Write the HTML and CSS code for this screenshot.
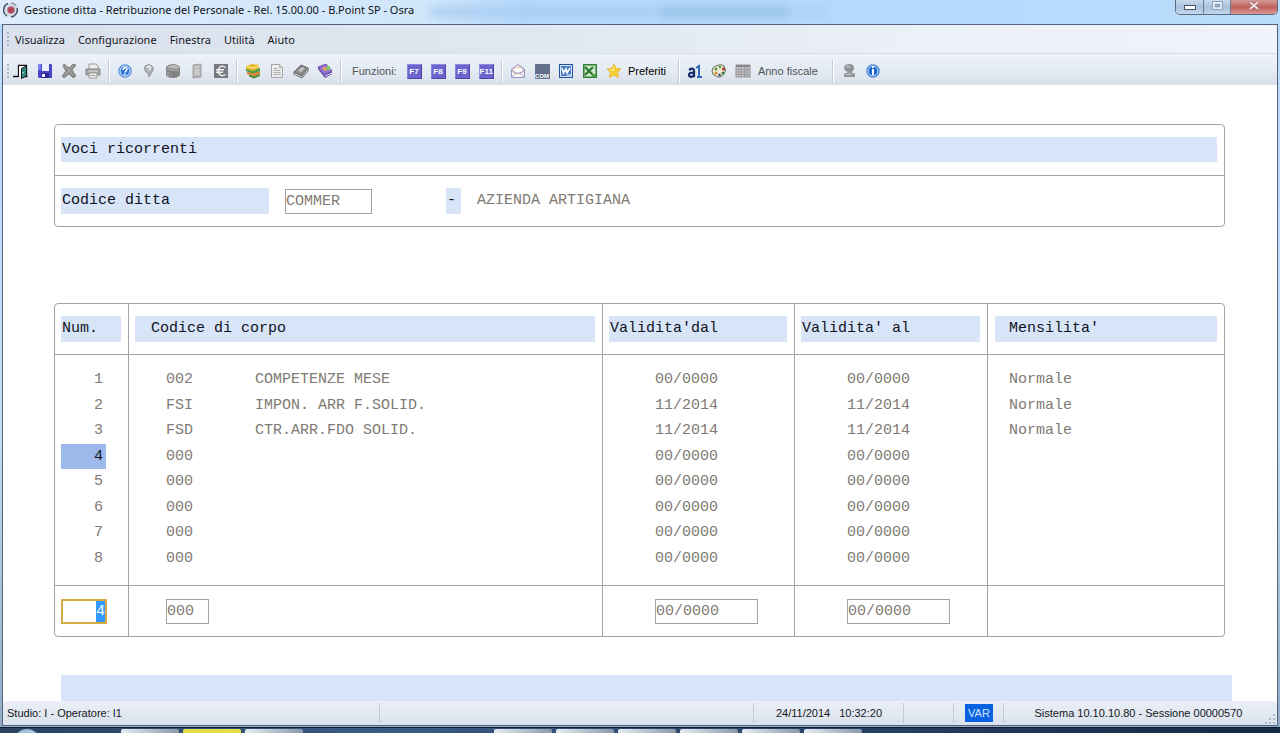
FILE: index.html
```html
<!DOCTYPE html>
<html lang="it">
<head>
<meta charset="utf-8">
<title>Gestione ditta - Retribuzione del Personale</title>
<link rel="stylesheet" href="styles.css">
</head>
<body>
<div class="window">
  <header class="titlebar">
    <svg class="app-icon" width="16" height="16" viewBox="0 0 16 16"><circle cx="8" cy="8" r="7" fill="#d9dde6"/><path d="M5 1.5A7 7 0 0 0 4 14M8 15a7 7 0 0 0 6-9" fill="none" stroke="#46506a" stroke-width="1.500"/><path d="M8 1a7 7 0 0 1 5 2.500" fill="none" stroke="#8b93a5" stroke-width="1.500"/><circle cx="8" cy="8" r="4" fill="#b9909e"/><circle cx="8" cy="8" r="3" fill="#b5405a"/></svg>
    <span class="title">Gestione ditta - Retribuzione del Personale - Rel. 15.00.00 - B.Point SP - Osra</span>
    <span class="glass"><i class="smudge smudge-a"></i><i class="smudge smudge-b"></i><i class="smudge smudge-c"></i></span>
    <div class="caption-buttons">
      <button class="cap cap-min" aria-label="Riduci a icona"><svg width="12" height="6" viewBox="0 0 12 6"><rect x=".5" y=".5" width="11" height="4" fill="#fff" stroke="#4b5566"/></svg></button>
      <button class="cap cap-max" aria-label="Ingrandisci"><svg width="11" height="9" viewBox="0 0 11 9"><rect x="1.500" y="1.500" width="8" height="6" fill="none" stroke="#e9f1f9" stroke-width="2"/><rect x=".5" y=".5" width="10" height="8" fill="none" stroke="#8d9fb5"/><rect x="3.500" y="3.500" width="4" height="2" fill="#9fb5ce" stroke="#8d9fb5"/></svg></button>
      <button class="cap cap-close" aria-label="Chiudi"><svg width="12" height="9" viewBox="0 0 12 9"><path d="M2 1l8 7M10 1L2 8" stroke="#a56a6c" stroke-width="4"/><path d="M2 1l8 7M10 1L2 8" stroke="#f0dcdc" stroke-width="2"/></svg></button>
    </div>
  </header>

  <div class="client">
    <nav class="menubar">
      <span class="grip"></span>
      <button>Visualizza</button><button>Configurazione</button><button>Finestra</button><button>Utilità</button><button>Aiuto</button>
    </nav>

    <div class="toolbar">
      <span class="grip"></span>
      <button aria-label="Esci"><svg viewBox="0 0 16 16"><path d="M0 13.500h5M12 13.500h2.500M5.500 14V2.500h8V13" fill="none" stroke="#111" stroke-width="1.300"/><path d="M6 3h7v10H6z" fill="#fff"/><path d="M8.500 5.500l5-2.500v10l-5 2.500z" fill="#2f8a86" stroke="#111"/><path d="M10 9v1.500" stroke="#fff"/></svg></button>
      <button aria-label="Salva"><svg viewBox="0 0 16 16"><path d="M1 1h13l1 1v13H2l-1-1z" fill="#4747c8"/><path d="M1 1h3v6H1z" fill="#8080ea"/><path d="M5 1h7v7H5z" fill="#eef2ff"/><path d="M4 10h8v5H4z" fill="#2a2a92"/><path d="M5 11h3v3H5z" fill="#f4f4ff"/></svg></button>
      <button aria-label="Elimina"><svg viewBox="0 0 16 16"><path d="M3 1l5 4 4-4 3 1-4 5 4 6-3 2-4-4-5 4-2-2 4-5-3-5z" fill="#8e8e8e" stroke="#858585"/><path d="M4 3l8 9M12 3l-8 9" stroke="#ababab"/></svg></button>
      <button aria-label="Stampa"><svg viewBox="0 0 16 16"><path d="M4 6V1h7l2 2v3" fill="#eee" stroke="#999"/><path d="M1 6h14v6H1z" fill="#a5a5a5" stroke="#858585"/><path d="M3 8h10" stroke="#ddd"/><path d="M4 10h8v5H4z" fill="#eee" stroke="#999"/><path d="M5.500 12.500h5" stroke="#999"/></svg></button>
      <span class="sep"></span>
      <button aria-label="Guida"><svg viewBox="0 0 16 16"><circle cx="8" cy="8" r="6.500" fill="#2f77db" stroke="#8fb4ea"/><circle cx="8" cy="8" r="5" fill="none" stroke="#f3f8ff"/><path d="M6 7c0-3 4-3 4-.7C10 8 8 7.700 8 9.500M8 10.500v1.500" fill="none" stroke="#fff" stroke-width="1.500"/></svg></button>
      <button aria-label="Guida rapida"><svg viewBox="0 0 16 16"><path d="M4 3q4-3 7 0 3 3 0 6l-3 5-1-4q-5-2-3-7z" fill="#aeb0b4" stroke="#989a9e"/><path d="M6 5c0-2 4-2 3.500 0-.3 1-1.500 1-1.500 2.500" fill="none" stroke="#f4f4f4" stroke-width="1.400"/></svg></button>
      <button aria-label="Archivi"><svg viewBox="0 0 16 16"><path d="M1 4q2-3 8-3 6 1 6 4v7q-2 3-7 3-6 0-7-3z" fill="#868686"/><path d="M2 4q3-2 7-2 4 0 5 3-4 2-12-1z" fill="#bdbdbd"/><path d="M2 6q5 2 12 1M3 9v4" fill="none" stroke="#b1b1b1"/><path d="M9 9v5" stroke="#747474"/></svg></button>
      <button aria-label="Calcolatrice"><svg viewBox="0 0 16 16"><path d="M4 2l8-1v13l-8 1z" fill="#b3b3b3" stroke="#a0a0a0"/><path d="M5.500 4h5M5.500 7h5M5.500 9h5M5.500 11h5" stroke="#e4e4e4"/></svg></button>
      <button aria-label="Euro"><svg viewBox="0 0 16 16"><path d="M1 1h14v14H1z" fill="#777b80"/><path d="M12.500 4.500C8 1.500 5.500 4 5.500 8s3 6 7 3.500M3 6.800h8M3 9.300h7" fill="none" stroke="#f2f2f2" stroke-width="1.400"/></svg></button>
      <span class="sep"></span>
      <button aria-label="Libri"><svg viewBox="0 0 16 16"><path d="M4 11l5 2 6-2v2l-6 2.500-5-2z" fill="#3f8f3f"/><path d="M2 8l6 2 7-2v3l-6 2.500L2 11z" fill="#d8853b"/><path d="M1 5l7 2 7-2v3l-7 2.500L1 8z" fill="#4f9e45"/><path d="M1 3l6-2 7 1v3L8 8 1 6z" fill="#e6b92e"/><path d="M2 3.500l6 1.500 6-2" fill="none" stroke="#fff0a0"/></svg></button>
      <button aria-label="Documento"><svg viewBox="0 0 16 16"><path d="M2.500 1.500h8l3 3v10h-11z" fill="#ececec" stroke="#a7a7a7"/><path d="M10.500 1.500v3h3M4.500 5.500h4M4.500 7.500h7M4.500 9.500h7M4.500 11.500h7" fill="none" stroke="#adadad"/></svg></button>
      <button aria-label="Manuale"><svg viewBox="0 0 16 16"><path d="M1 9l7-7 7 3-6 8z" fill="#8b8b8b" stroke="#666"/><path d="M1 9l8 4 6-8v3l-6 7-8-4z" fill="#e2e2e2" stroke="#666"/><path d="M5 8l4-4 3 1-4 4z" fill="#c7c7c7"/></svg></button>
      <button aria-label="Rubrica"><svg viewBox="0 0 16 16"><path d="M1 4l8-3 6 7-8 4z" fill="#9470d2" stroke="#7451b4"/><path d="M7 12l8-4v3l-7 4-7-9V4z" fill="#5f48a8"/><path d="M8 13l7-3" stroke="#eee"/><path d="M5 5l3-1 2 3-2 1z" fill="#efae43"/><path d="M9 3h4v4h-3z" fill="#80c968"/></svg></button>
      <span class="sep"></span>
      <span class="label">Funzioni:</span>
      <button class="fkey"><span>F7</span></button><button class="fkey"><span>F8</span></button><button class="fkey"><span>F9</span></button><button class="fkey"><span>F11</span></button>
      <span class="sep"></span>
      <button aria-label="Posta"><svg viewBox="0 0 16 16"><path d="M1.500 6L8 1.500 14.500 6v8.500h-13z" fill="#fcf5f1" stroke="#9396c9"/><path d="M3 6q5-4 10 0v3l-5 2-5-2z" fill="#fff" stroke="#e2b59b"/><path d="M2 14l4-4h4l4 4M2 7l4 3M14 7l-4 3" fill="none" stroke="#9da0d0"/></svg></button>
      <button class="com"><span>COM</span></button>
      <button aria-label="Word"><svg viewBox="0 0 16 16"><path d="M1 1h14v14H1z" fill="#24539e"/><path d="M2.500 2.500h11v11h-11z" fill="#477cc2" stroke="#dce9fc"/><path d="M4 5l1.500 5L8 6l1 4 3-5" fill="none" stroke="#fff" stroke-width="1.600"/><path d="M9 12h4" stroke="#fff"/></svg></button>
      <button aria-label="Excel"><svg viewBox="0 0 16 16"><path d="M1 1h14v14H1z" fill="#37803c"/><path d="M2.500 2.500h11v11h-11z" fill="#d4ead0" stroke="#77b06f"/><path d="M3 4l8 8M11 4l-8 8" stroke="#287630" stroke-width="2.200"/><path d="M10 11h4v3h-4z" fill="#54a04c"/></svg></button>
      <button class="with-text"><svg viewBox="0 0 16 16"><path d="M8 1l2 4.500 5 .5-3.500 3.500 1 5L8 12l-4.500 2.500 1-5L1 6l5-.5z" fill="#f9ce35" stroke="#edb83b"/><path d="M8 3v5L3 7l4-1z" fill="#fff08e"/></svg><span class="preferiti">Preferiti</span></button>
      <span class="sep"></span>
      <button aria-label="Carattere"><svg viewBox="0 0 16 16"><path d="M2 7q5-3 5 1v6M7 10q-5-1-5 2 0 3 5 1" fill="none" stroke="#14286e" stroke-width="2.200"/><path d="M9 5l3-2v11M10 14h5" fill="none" stroke="#3567bd" stroke-width="2"/></svg></button>
      <button aria-label="Colori"><svg viewBox="0 0 16 16"><path d="M5 3q5-3 8 0 3 4 0 8-4 5-8 2-4-1-4-5 0-4 4-5z" fill="#f3ead0" stroke="#6a685d"/><circle cx="5" cy="6" r="1.500" fill="#4a963f"/><circle cx="9" cy="4" r="1.300" fill="#4a963f"/><circle cx="12.500" cy="6" r="1.500" fill="#9b3228"/><circle cx="12" cy="10" r="1.500" fill="#388749"/><circle cx="5" cy="10" r="1.500" fill="#d08a37"/><circle cx="8.500" cy="12" r="1.400" fill="#395f9a"/></svg></button>
      <button class="with-text"><svg viewBox="0 0 16 16"><path d="M1 2h14v12H1z" fill="#c9c9cb" stroke="#929296"/><path d="M1 3h14" stroke="#85858a" stroke-width="2"/><path d="M1 6.500h14M1 9h14M1 11.500h14M4 4v10M6.500 4v10M9.500 4v10M12 4v10" stroke="#98989c"/></svg><span class="anno">Anno fiscale</span></button>
      <span class="sep"></span>
      <button aria-label="Utente"><svg viewBox="0 0 16 16"><path d="M3 4q1-3 5-3 5 0 5 4 0 3-3 4l4 2v3H3v-3l4-2Q3 8 3 4z" fill="#8f9194"/><path d="M5 4q3-2 4 1M5 12q3-2 5 0" fill="none" stroke="#c1c3c6" stroke-width="1.500"/></svg></button>
      <button aria-label="Informazioni"><svg viewBox="0 0 16 16"><circle cx="8" cy="8" r="6.500" fill="#2368d0" stroke="#83abe7"/><circle cx="8" cy="8" r="5" fill="none" stroke="#d5e7ff"/><path d="M8 3v2M8 6v6" stroke="#fff" stroke-width="2"/></svg></button>
    </div>

    <main class="form">
      <section class="panel">
        <div class="panel-row"><h1 class="band">Voci ricorrenti</h1></div>
        <div class="panel-row panel-row-ruled">
          <label class="band band-label" for="ditta">Codice ditta</label>
          <input id="ditta" class="field field-ditta" value="COMMER">
          <span class="band dash">-</span>
          <span class="company">AZIENDA ARTIGIANA</span>
        </div>
      </section>

      <table class="grid">
        <colgroup><col class="c-num"><col class="c-code"><col class="c-desc"><col class="c-from"><col class="c-to"><col></colgroup>
        <thead>
          <tr><th><span class="band">Num.</span></th><th colspan="2"><span class="band indent">Codice di corpo</span></th><th><span class="band">Validita'dal</span></th><th><span class="band">Validita' al</span></th><th><span class="band indent">Mensilita'</span></th></tr>
        </thead>
        <tbody>
          <tr><td><span class="num">1</span></td><td>002</td><td>COMPETENZE MESE</td><td>00/0000</td><td>00/0000</td><td>Normale</td></tr>
          <tr><td><span class="num">2</span></td><td>FSI</td><td>IMPON. ARR F.SOLID.</td><td>11/2014</td><td>11/2014</td><td>Normale</td></tr>
          <tr><td><span class="num">3</span></td><td>FSD</td><td>CTR.ARR.FDO SOLID.</td><td>11/2014</td><td>11/2014</td><td>Normale</td></tr>
          <tr><td><span class="num current">4</span></td><td>000</td><td></td><td>00/0000</td><td>00/0000</td><td></td></tr>
          <tr><td><span class="num">5</span></td><td>000</td><td></td><td>00/0000</td><td>00/0000</td><td></td></tr>
          <tr><td><span class="num">6</span></td><td>000</td><td></td><td>00/0000</td><td>00/0000</td><td></td></tr>
          <tr><td><span class="num">7</span></td><td>000</td><td></td><td>00/0000</td><td>00/0000</td><td></td></tr>
          <tr><td><span class="num">8</span></td><td>000</td><td></td><td>00/0000</td><td>00/0000</td><td></td></tr>
        </tbody>
        <tfoot>
          <tr><td><input id="riga" class="field field-num" aria-label="Num." value="4"></td><td><input class="field field-code" aria-label="Codice di corpo" value="000"></td><td></td><td><input class="field field-date" aria-label="Validita' dal" value="00/0000"></td><td><input class="field field-date" aria-label="Validita' al" value="00/0000"></td><td></td></tr>
        </tfoot>
      </table>
      <div class="message"></div>
    </main>

    <footer class="status">
      <span class="s-user">Studio: I - Operatore: I1</span>
      <span class="s-fill"></span>
      <span class="s-date"><span>24/11/2014</span><span>10:32:20</span></span>
      <span class="s-small"></span>
      <span class="s-small"><b class="var">VAR</b></span>
      <span class="s-system">Sistema 10.10.10.80 - Sessione 00000570</span>
      <svg class="resize" width="11" height="11" viewBox="0 0 11 11"><path d="M8 0h2v2H8zM4 4h2v2H4zM8 4h2v2H8zM0 8h2v2H0zM4 8h2v2H4zM8 8h2v2H8z" fill="#a9b9cf"/></svg>
    </footer>
  </div>
</div>
<div class="taskbar">
  <i class="orb"></i>
  <div class="tasks"><i></i><i class="yellow"></i><i></i></div>
  <div class="tasks"><i></i><i></i><i></i><i></i><i></i><i></i></div>
</div>
<script src="app.js"></script>
</body>
</html>
```
FILE: styles.css
```css
* { box-sizing: border-box; }
body {
  margin: 0;
  height: 100vh;
  display: flex;
  flex-direction: column;
  overflow: hidden;
  font-family: "Liberation Sans", Arial, sans-serif;
  font-size: 11px;
  color: #15161c;
}
button {
  border: 0;
  padding: 0;
  background: none;
  font: inherit;
  color: inherit;
}
.window {
  flex: 1;
  min-height: 0;
  display: flex;
  flex-direction: column;
  padding: 0 2px 1px;
  background: linear-gradient(#b7d9fa, #b9dbfb 24px, #c3dcf3 60%, #93aac6);
}
.titlebar {
  height: 24px;
  flex: none;
  display: flex;
  align-items: flex-start;
  padding-left: 3px;
  margin: 0 -2px;
  background: linear-gradient(90deg, #dcecfb, #d0e6fb 430px, #b5d8fb 520px, #b9dbfc);
}
.app-icon { flex: none; margin: 2px 5px 0 0; }
.title {
  font-family: "Noto Sans", sans-serif;
  font-size: 11px;
  line-height: 20px;
  color: #101218;
  white-space: nowrap;
}
.glass {
  flex: 1;
  display: flex;
  align-items: center;
  height: 24px;
  padding-left: 16px;
  overflow: hidden;
}
.smudge {
  height: 8px;
  border-radius: 4px;
  filter: blur(4px);
  background: #9cc4e9;
}
.smudge-a { width: 230px; background: #a6cbf0; }
.smudge-b { width: 130px; height: 12px; }
.smudge-c { width: 40px; background: #abcff2; }
.caption-buttons {
  display: flex;
  height: 15px;
  margin-right: 2px;
  border: 1px solid #5c6c80;
  border-top: 0;
  border-radius: 0 0 5px 5px;
  overflow: hidden;
}
.cap {
  display: flex;
  justify-content: center;
  align-items: center;
  background: linear-gradient(#c8daed, #a9c1dc 50%, #c2d8ef);
  border-right: 1px solid #6b7d93;
}
.cap-min { width: 28px; }
.cap-min svg { margin-top: 1px; }
.cap-max { width: 27px; padding-bottom: 4px; }
.cap-close {
  width: 46px;
  border: 0;
  padding-bottom: 4px;
  background: linear-gradient(#d59c98, #c1605c 50%, #d99693);
}
.client {
  flex: 1;
  min-height: 0;
  display: flex;
  flex-direction: column;
  border: 1px solid #52647d;
  background: #fff;
}
.menubar {
  flex: none;
  height: 29px;
  display: flex;
  align-items: center;
  gap: 13px;
  padding-left: 4px;
  background: linear-gradient(90deg, #dae1ec, #dfe7f1 40%, #edf1f8 75%, #f0f3f9);
  border-bottom: 1px solid #d5dde7;
  font-family: "Noto Sans", sans-serif;
  font-size: 11px;
  color: #15161c;
}
.menubar .grip { margin-right: -7px; }
.grip {
  flex: none;
  width: 2px;
  height: 14px;
  background: repeating-linear-gradient(#a9b6c8 0 2px, transparent 2px 4px);
}
.toolbar {
  flex: none;
  height: 31px;
  display: flex;
  align-items: center;
  padding: 3px 0 0 4px;
  background: linear-gradient(#eef3fa, #e4ebf3 50%, #d9e0e9);
}
.toolbar button {
  flex: none;
  width: 24px;
  height: 24px;
  display: flex;
  align-items: center;
  justify-content: center;
}
.toolbar svg { width: 16px; height: 16px; flex: none; }
.toolbar .with-text {
  width: auto;
  padding-left: 4px;
  justify-content: flex-start;
}
.preferiti { padding: 0 9px 0 6px; color: #000; }
.anno { padding: 0 11px 0 7px; color: #51555c; }
.label { width: 57px; padding-left: 7px; color: #51555c; }
.sep {
  flex: none;
  width: 8px;
  height: 24px;
  background: linear-gradient(90deg, transparent 3px, #c3cedc 3px 4px, #fff 4px 5px, transparent 5px);
}
.fkey span {
  width: 15px;
  height: 15px;
  background: #6c64cf;
  border: 1px solid #8d87e0;
  border-right-color: #4b43a5;
  border-bottom-color: #4b43a5;
  color: #fff;
  font-size: 8px;
  font-weight: bold;
  line-height: 13px;
  text-align: center;
}
.com span {
  width: 15px;
  height: 15px;
  background: #62708d;
  color: #fff;
  font-size: 6px;
  font-weight: bold;
  line-height: 6px;
  padding-top: 9px;
  text-align: center;
}
.form {
  flex: 1;
  min-height: 0;
  overflow: hidden;
  display: flex;
  flex-direction: column;
  padding: 39px 52px 0 51px;
  font: 15px/26px "Liberation Mono", "Courier New", monospace;
  color: #807a73;
}
.panel {
  flex: none;
  border: 1px solid #a3a5a9;
  border-radius: 4px;
}
.panel-row {
  display: flex;
  padding: 12px 7px 13px 6px;
}
.panel-row-ruled {
  border-top: 1px solid #a3a5a9;
  padding-bottom: 12px;
}
.band {
  display: block;
  height: 26px;
  padding-left: 1px;
  background: #d8e4f8;
  color: #10131f;
  font: inherit;
}
h1.band { flex: 1; height: 25px; margin: 0; }
.band-label { width: 208px; margin-right: 16px; }
.field {
  display: block;
  height: 25px;
  padding: 0;
  border: 1px solid #a3a3a3;
  border-radius: 0;
  outline: 0;
  background: #fff;
  font: inherit;
  color: inherit;
}
.field-ditta { width: 87px; margin: 1px 74px 0 0; }
.dash { width: 15px; margin-right: 16px; }
.company { white-space: nowrap; }
.grid {
  flex: none;
  width: 100%;
  margin: 76px 0 38px;
  table-layout: fixed;
  border: 1px solid #a3a5a9;
  border-radius: 4px;
  border-spacing: 0;
}
.c-num { width: 74px; }
.c-code { width: 126px; }
.c-desc { width: 348px; }
.c-from { width: 192px; }
.c-to { width: 193px; }
th, td {
  padding: 0;
  text-align: left;
  font-weight: normal;
  vertical-align: top;
  border-right: 1px solid #a3a5a9;
}
th:last-child, td:last-child, td:nth-child(2) { border-right: 0; }
th { padding: 12px 7px 12px 6px; border-bottom: 1px solid #a3a5a9; }
th .indent { padding-left: 16px; }
th:last-child { padding-left: 7px; }
th:last-child .indent { padding-left: 14px; }
td:nth-child(2) { padding-left: 37px; }
td:nth-child(4), td:nth-child(5) { padding-left: 52px; }
td:last-child { padding-left: 21px; }
tbody tr { height: 26px; }
tbody tr:nth-child(even) { height: 25px; line-height: 25px; }
tbody td { white-space: nowrap; }
tbody tr:first-child td { padding-top: 12px; height: 38px; }
tbody tr:last-child td { padding-bottom: 14px; }
.num {
  display: block;
  width: 45px;
  margin-left: 6px;
  padding-right: 3px;
  text-align: right;
}
.current { background: #9db8ea; color: #10131f; }
tfoot td { border-top: 1px solid #a3a5a9; padding-top: 13px; padding-bottom: 12px; }
.field-num {
  width: 46px;
  margin-left: 6px;
  border: 2px solid #d5ab45;
  text-align: right;
}
.field-num::selection { background: #3399ff; color: #fff; }
.field-code { width: 43px; }
.field-date { width: 103px; }
.message {
  flex: 1;
  margin: 0 -7px 0 7px;
  background: #d8e4f8;
}
.status {
  flex: none;
  position: relative;
  height: 24px;
  display: flex;
  background: linear-gradient(#ebf0f7, #dbe2ec);
  line-height: 24px;
}
.status > span {
  display: flex;
  align-items: center;
  justify-content: center;
  background: linear-gradient(#c2ccd9, #c2ccd9) right center / 1px 20px no-repeat;
}
.status .s-user { width: 377px; padding-left: 4px; justify-content: flex-start; }
.s-fill { flex: 1; }
.status .s-date { width: 150px; gap: 9px; }
.s-small { width: 50px; }
.status .s-system { width: 273px; padding-right: 4px; background: none; }
.var {
  background: #0a62e0;
  color: #cfe4ff;
  font-weight: normal;
  line-height: 18px;
  width: 28px;
  text-align: center;
}
.resize { position: absolute; right: 1px; bottom: 0; }
.taskbar {
  flex: none;
  height: 6px;
  display: flex;
  overflow: hidden;
  border-top: 1px solid #0e1c31;
  background: linear-gradient(90deg, #2b425f, #3a5a86 30%, #233a5b 75%, #152943);
}
.orb {
  width: 24px;
  height: 20px;
  margin: 1px 82px 0 15px;
  border-radius: 50%;
  background: #9fc4dc;
}
.tasks { display: flex; gap: 4px; margin-right: 191px; }
.tasks i {
  width: 58px;
  height: 8px;
  margin-top: 1px;
  border-radius: 2px 2px 0 0;
  background: linear-gradient(90deg, #e7ecf1, #8a98a8);
}
.tasks .yellow { background: #e5e04a; }
```
FILE: app.js
```js
const riga = document.getElementById("riga");
riga.focus();
riga.select();
```
